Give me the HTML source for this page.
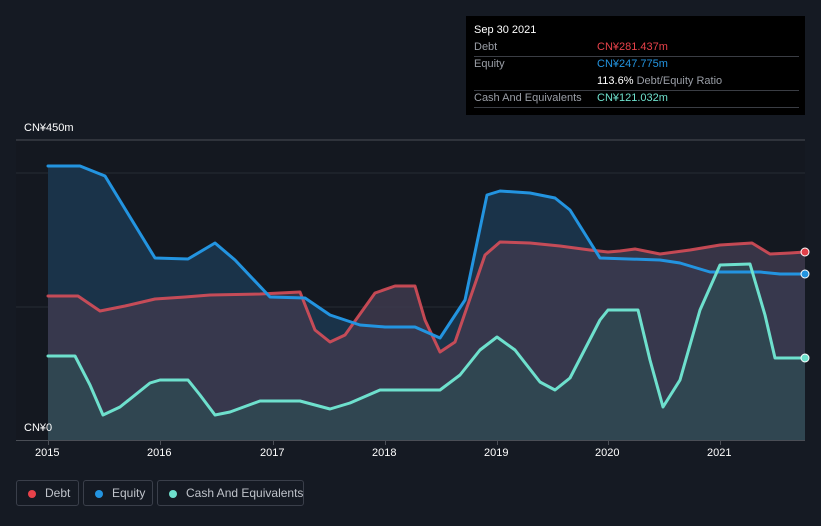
<!DOCTYPE html>
<html><head><meta charset="utf-8"><style>
html,body{margin:0;width:821px;height:526px;overflow:hidden}
body{background:#151a23;font-family:"Liberation Sans",sans-serif;position:relative}
.tt{position:absolute;left:466px;top:16px;width:339px;height:99px;background:#000;color:#fff;font-size:11px}
.row{position:absolute;left:8px;right:6px;height:17px;border-bottom:1px solid #3a3d44;line-height:17px}
.row span.l{color:#9a9ea6;position:absolute;left:0}
.row span.v{position:absolute;left:123px;white-space:nowrap}
.leg{position:absolute;top:480px;height:26px;border:1px solid #3a3f4a;border-radius:3px;color:#bfc3ca;font-size:12px;line-height:24px;box-sizing:border-box;white-space:nowrap}
.leg i{position:absolute;left:11px;top:9px;width:8px;height:8px;border-radius:50%}
.leg span{position:absolute;left:28px}
.ax{position:absolute;color:#fff;font-size:11px;white-space:nowrap}
</style></head><body>
<svg width="821" height="526" style="position:absolute;left:0;top:0">
<rect x="16" y="140" width="789" height="300" fill="#141820"/>
<line x1="16" y1="140" x2="805" y2="140" stroke="#4a4e56"/>
<line x1="16" y1="173" x2="805" y2="173" stroke="#262b34"/>
<line x1="16" y1="307" x2="805" y2="307" stroke="#262b34"/>
<polygon fill="#1a3349" points="48,440 48,166 80,166 105,176 155,258 188,259 215,243 235,260 270,297 305,298 330,315 360,325 385,327 415,327 440,338 465,300 487,195 500,191 530,193 555,198 570,210 600,258 660,260 680,263 710,272 760,272 780,274 805,274 805,440"/>
<polygon fill="#3d3a4e" fill-opacity="0.85" points="48,440 48,296 78,296 100,311 125,306 155,299 185,297 210,295 260,294 300,292 315,330 330,342 345,335 375,293 395,286 415,286 425,320 440,352 455,342 485,255 500,242 530,243 560,246 590,250 608,252 620,251 635,249 660,254 690,250 720,245 752,243 770,254 790,253 805,252 805,440"/>
<polygon fill="#2e4a52" fill-opacity="0.8" points="48,440 48,356 75,356 90,385 103,415 120,407 150,383 160,380 188,380 200,395 215,415 230,412 260,401 300,401 330,409 350,403 380,390 440,390 460,375 480,350 497,337 515,350 540,382 555,390 570,378 600,320 608,310 638,310 650,360 663,407 680,380 700,310 720,265 750,264 765,315 775,358 805,358 805,440"/>
<g fill="none" stroke-width="3" stroke-linejoin="round" stroke-linecap="round">
<polyline stroke="#e0505a" stroke-opacity="0.85" points="48,296 78,296 100,311 125,306 155,299 185,297 210,295 260,294 300,292 315,330 330,342 345,335 375,293 395,286 415,286 425,320 440,352 455,342 485,255 500,242 530,243 560,246 590,250 608,252 620,251 635,249 660,254 690,250 720,245 752,243 770,254 790,253 805,252"/>
<polyline stroke="#2394e0" points="48,166 80,166 105,176 155,258 188,259 215,243 235,260 270,297 305,298 330,315 360,325 385,327 415,327 440,338 465,300 487,195 500,191 530,193 555,198 570,210 600,258 660,260 680,263 710,272 760,272 780,274 805,274"/>
<polyline stroke="#6ee0cd" points="48,356 75,356 90,385 103,415 120,407 150,383 160,380 188,380 200,395 215,415 230,412 260,401 300,401 330,409 350,403 380,390 440,390 460,375 480,350 497,337 515,350 540,382 555,390 570,378 600,320 608,310 638,310 650,360 663,407 680,380 700,310 720,265 750,264 765,315 775,358 805,358"/>
</g>
<circle cx="805" cy="252" r="4" fill="#e0404a" stroke="#fff" stroke-width="1"/>
<circle cx="805" cy="274" r="4" fill="#2394e0" stroke="#fff" stroke-width="1"/>
<circle cx="805" cy="358" r="4" fill="#6ee0cd" stroke="#fff" stroke-width="1"/>
<line x1="16" y1="440.5" x2="805" y2="440.5" stroke="#4a4e56"/>
<g stroke="#4a4e56"><line x1="48.5" y1="440" x2="48.5" y2="445"/><line x1="160.5" y1="440" x2="160.5" y2="445"/><line x1="273.5" y1="440" x2="273.5" y2="445"/><line x1="385.5" y1="440" x2="385.5" y2="445"/><line x1="497.5" y1="440" x2="497.5" y2="445"/><line x1="608.5" y1="440" x2="608.5" y2="445"/><line x1="720.5" y1="440" x2="720.5" y2="445"/></g>
</svg>
<div class="ax" style="left:24px;top:122px">CN¥450m</div>
<div class="ax" style="left:24px;top:422px">CN¥0</div>
<div class="ax" style="left:35px;top:447px">2015</div>
<div class="ax" style="left:147px;top:447px">2016</div>
<div class="ax" style="left:260px;top:447px">2017</div>
<div class="ax" style="left:372px;top:447px">2018</div>
<div class="ax" style="left:484px;top:447px">2019</div>
<div class="ax" style="left:595px;top:447px">2020</div>
<div class="ax" style="left:707px;top:447px">2021</div>
<div class="tt">
<div style="position:absolute;left:8px;top:8px;font-size:11px">Sep 30 2021</div>
<div class="row" style="top:23px"><span class="l">Debt</span><span class="v" style="color:#e8424a">CN¥281.437m</span></div>
<div class="row" style="top:40px;border:none"><span class="l">Equity</span><span class="v" style="color:#2394e0">CN¥247.775m</span></div>
<div class="row" style="top:57px"><span class="v"><b style="font-weight:normal;color:#fff">113.6%</b> <span style="color:#9a9ea6">Debt/Equity Ratio</span></span></div>
<div class="row" style="top:74px"><span class="l">Cash And Equivalents</span><span class="v" style="color:#6ee0cd">CN¥121.032m</span></div>
</div>
<div class="leg" style="left:16px;width:63px"><i style="background:#e8424a"></i><span>Debt</span></div>
<div class="leg" style="left:83px;width:70px"><i style="background:#2394e0"></i><span>Equity</span></div>
<div class="leg" style="left:157px;width:147px"><i style="background:#6ee0cd"></i><span>Cash And Equivalents</span></div>
</body></html>
